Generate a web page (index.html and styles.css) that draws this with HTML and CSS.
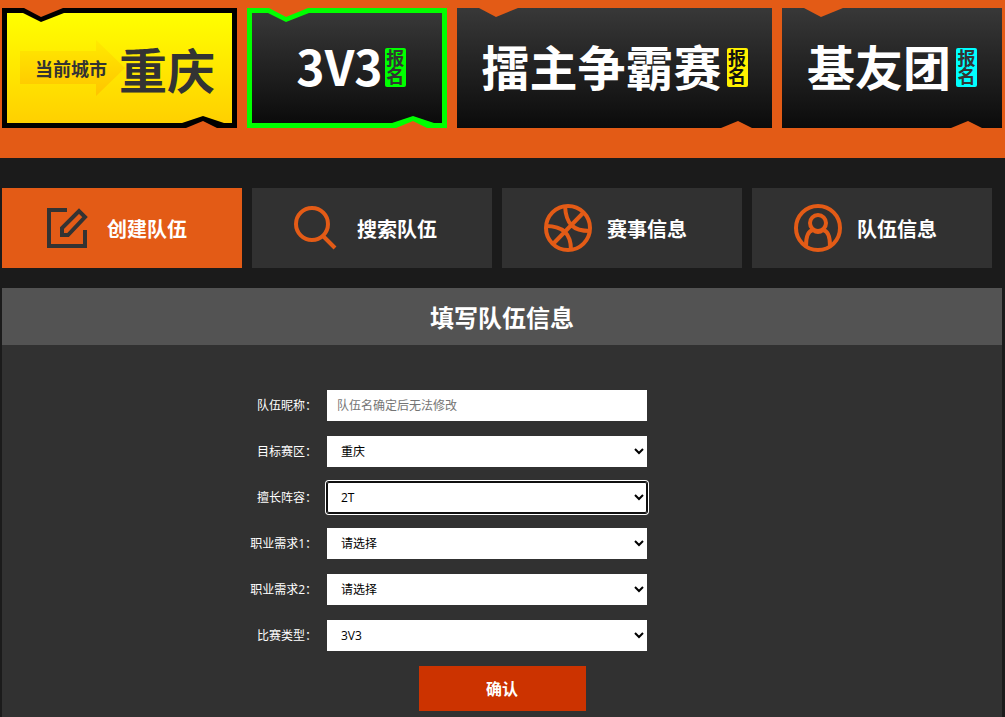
FILE: index.html
```html
<!DOCTYPE html>
<html lang="zh-CN">
<head>
<meta charset="utf-8">
<meta name="viewport" content="width=device-width, initial-scale=1">
<title>填写队伍信息</title>
<link rel="stylesheet" href="styles.css">
</head>
<body>
<header class="banner">
  <div class="card card-city">
    <svg class="notch notch-top" viewBox="0 0 50 15" aria-hidden="true"><path class="edge" d="M5 5V0H46V5L23 14Z"/><path class="cut" d="M6 0H45L23 9Z"/></svg>
    <div class="city-tag">
      <svg class="city-arrow" viewBox="0 0 105 56" aria-hidden="true">
        <defs><linearGradient id="arrow" x1="0" y1="0" x2="0" y2="1"><stop offset="0" stop-color="#ffea00"/><stop offset="1" stop-color="#ffc400"/></linearGradient></defs>
        <path fill="url(#arrow)" d="M0 11H76V0L105 28L76 56V44H0Z"/>
      </svg>
      <span class="city-label">当前城市</span>
    </div>
    <span class="card-title">重庆</span>
    <svg class="notch notch-bottom" viewBox="0 0 50 12" aria-hidden="true"><path class="edge" d="M5 7V12H47V7L26 0Z" /><path class="cut" d="M9 12H40L26 5Z"/></svg>
  </div>
  <a class="card card-green" href="#">
    <svg class="notch notch-top" viewBox="0 0 50 15" aria-hidden="true"><path class="edge" d="M5 5V0H46V5L23 14Z"/><path class="cut" d="M6 0H45L23 9Z"/></svg>
    <span class="card-title">3V3</span><span class="badge">报名</span>
    <svg class="notch notch-bottom" viewBox="0 0 50 12" aria-hidden="true"><path class="edge" d="M5 7V12H47V7L26 0Z"/><path class="cut" d="M9 12H40L26 5Z"/></svg>
  </a>
  <a class="card card-yellow" href="#">
    <svg class="notch notch-top" viewBox="0 0 50 15" aria-hidden="true"><path class="cut" d="M6 0H45L23 9Z"/></svg>
    <span class="card-title">擂主争霸赛</span><span class="badge">报名</span>
    <svg class="notch notch-bottom" viewBox="0 0 50 12" aria-hidden="true"><path class="cut" d="M9 12H40L26 5Z"/></svg>
  </a>
  <a class="card card-cyan" href="#">
    <svg class="notch notch-top" viewBox="0 0 50 15" aria-hidden="true"><path class="cut" d="M6 0H45L23 9Z"/></svg>
    <span class="card-title">基友团</span><span class="badge">报名</span>
    <svg class="notch notch-bottom" viewBox="0 0 50 12" aria-hidden="true"><path class="cut" d="M9 12H40L26 5Z"/></svg>
  </a>
</header>

<nav class="tabs">
  <a class="tab tab-active" href="#">
    <svg class="tab-icon" viewBox="0 0 48 48" aria-hidden="true"><path d="M23 6H5V42H41V26M18 31V24L35 7L41 13L24 31Z"/></svg>
    <span>创建队伍</span>
  </a>
  <a class="tab" href="#">
    <svg class="tab-icon" viewBox="0 0 48 48" aria-hidden="true"><circle cx="18" cy="20" r="16"/><path d="M28 31L41 44"/></svg>
    <span>搜索队伍</span>
  </a>
  <a class="tab" href="#">
    <svg class="tab-icon" viewBox="0 0 48 48" aria-hidden="true"><circle cx="24" cy="24" r="22"/><path d="M9 40L40 8M21 2C22 20 29 27 46 27M2 22C17 22 27 28 27 46"/></svg>
    <span>赛事信息</span>
  </a>
  <a class="tab" href="#">
    <svg class="tab-icon" viewBox="0 0 48 48" aria-hidden="true"><circle cx="24" cy="24" r="22"/><circle cx="24" cy="19" r="8"/><path d="M12 42C12 34 13 27 19 26Q24 30 29 26C35 27 36 34 36 42"/></svg>
    <span>队伍信息</span>
  </a>
</nav>

<main class="panel">
  <h1 class="panel-title">填写队伍信息</h1>
  <form class="team-form">
    <div class="row">
      <label for="team-name">队伍昵称：</label>
      <input class="field" id="team-name" type="text" placeholder="队伍名确定后无法修改">
    </div>
    <div class="row">
      <label for="region">目标赛区：</label>
      <select class="field" id="region"><option>重庆</option></select>
    </div>
    <div class="row">
      <label for="lineup">擅长阵容：</label>
      <select class="field field-current" id="lineup"><option>2T</option></select>
    </div>
    <div class="row">
      <label for="role1">职业需求1：</label>
      <select class="field" id="role1"><option>请选择</option></select>
    </div>
    <div class="row">
      <label for="role2">职业需求2：</label>
      <select class="field" id="role2"><option>请选择</option></select>
    </div>
    <div class="row">
      <label for="match">比赛类型：</label>
      <select class="field" id="match"><option>3V3</option></select>
    </div>
    <button class="submit" type="submit">确认</button>
  </form>
</main>
</body>
</html>
```

FILE: styles.css
```css
* {
  box-sizing: border-box;
}

body {
  margin: 0;
  min-height: 100vh;
  display: flex;
  flex-direction: column;
  background: #1b1b1b;
  color: #fff;
  font-family: "Open Sans", "Noto Sans CJK SC", sans-serif;
  font-size: 12px;
}

a {
  color: inherit;
  text-decoration: none;
}

.banner {
  display: grid;
  grid-template-columns: 235fr 200fr 315fr 220fr;
  gap: 10px;
  padding: 8px 3px 30px 2px;
  background: #e35b16;
  font-family: "Noto Sans CJK SC", sans-serif;
  font-weight: 700;
}

.card {
  position: relative;
  display: flex;
  align-items: center;
  justify-content: center;
  gap: 5px;
  height: 120px;
  background: linear-gradient(#383838, #0b0b0b);
}

.card-title {
  padding-bottom: 6px;
  font-size: 48px;
  line-height: 72px;
  white-space: nowrap;
}

.card-city {
  justify-content: flex-start;
  gap: 0;
  padding: 0 12px 0 13px;
  border: 5px solid #000;
  background: linear-gradient(#ff0, #ffd000);
  color: #333;
  --edge: #000;
}

.card-city .card-title {
  padding-bottom: 0;
}

.card-green {
  gap: 2px;
  padding-left: 8px;
  border: 5px solid #0f0;
  --edge: #0f0;
  --badge: #0f0;
}

.card-yellow {
  --badge: #fff100;
}

.card-yellow .badge {
  color: #111;
}

.card-cyan {
  --badge: #0ff;
}

.notch {
  position: absolute;
}

.notch-top {
  top: 0;
  left: 16px;
  width: 50px;
  height: 15px;
}

.notch-bottom {
  right: 10px;
  bottom: 0;
  width: 50px;
  height: 12px;
}

.card-city .notch-top,
.card-green .notch-top {
  top: -5px;
  left: 11px;
}

.card-city .notch-bottom,
.card-green .notch-bottom {
  right: 5px;
  bottom: -5px;
}

.edge {
  fill: var(--edge);
}

.cut {
  fill: #e35b16;
}

.city-tag {
  display: grid;
  align-items: center;
  width: 99px;
}

.city-arrow,
.city-label {
  grid-area: 1 / 1;
}

.city-arrow {
  width: 105px;
  height: 56px;
}

.city-label {
  padding-left: 15px;
  font-size: 18px;
  line-height: 24px;
}

.badge {
  width: 21px;
  margin-bottom: 1px;
  padding: 0 1px 3px;
  border-radius: 2px;
  background: var(--badge);
  color: #333;
  font-size: 18px;
  line-height: 18px;
  text-align: center;
  word-break: break-all;
}

.tabs {
  display: grid;
  grid-template-columns: repeat(4, 1fr);
  gap: 10px;
  padding: 30px 13px 20px 2px;
}

.tab {
  display: flex;
  align-items: center;
  gap: 15px;
  height: 80px;
  padding-left: 42px;
  background: #313131;
  font-size: 20px;
  font-weight: 700;
  white-space: nowrap;
}

.tab-icon {
  width: 48px;
  height: 48px;
  fill: none;
  stroke: #e35b16;
  stroke-width: 4;
}

.tab-active {
  background: #e35b16;
}

.tab-active .tab-icon {
  stroke: #333;
}

.panel {
  flex: 1;
  margin: 0 3px 0 2px;
  background: #313131;
}

.panel-title {
  margin: 0;
  padding: 12px 0 9px;
  background: #535353;
  font-size: 24px;
  line-height: 36px;
  text-align: center;
}

.team-form {
  display: flex;
  flex-direction: column;
  gap: 15px;
  padding: 45px 0 6px;
}

.row {
  display: grid;
  grid-template-columns: 315fr 320px 345fr;
  column-gap: 10px;
  align-items: center;
}

.row label {
  padding-bottom: 2px;
  text-align: right;
}

.field {
  width: 100%;
  height: 31px;
  padding: 0 10px;
  border: 0;
  border-radius: 0;
  background: #fff;
  color: #000;
  font: inherit;
}

select.field {
  padding-right: 2px;
}

.field::placeholder {
  color: #757575;
}

.field-current {
  border-radius: 2px;
  box-shadow: inset 0 0 0 1px #101010, 0 0 0 1px #101010, 0 0 0 2px #fff;
}

.submit {
  align-self: center;
  width: 167px;
  height: 45px;
  padding: 0 0 2px;
  border: 0;
  background: #c30;
  color: #fff;
  font: inherit;
  font-size: 16px;
  font-weight: 700;
}
```
